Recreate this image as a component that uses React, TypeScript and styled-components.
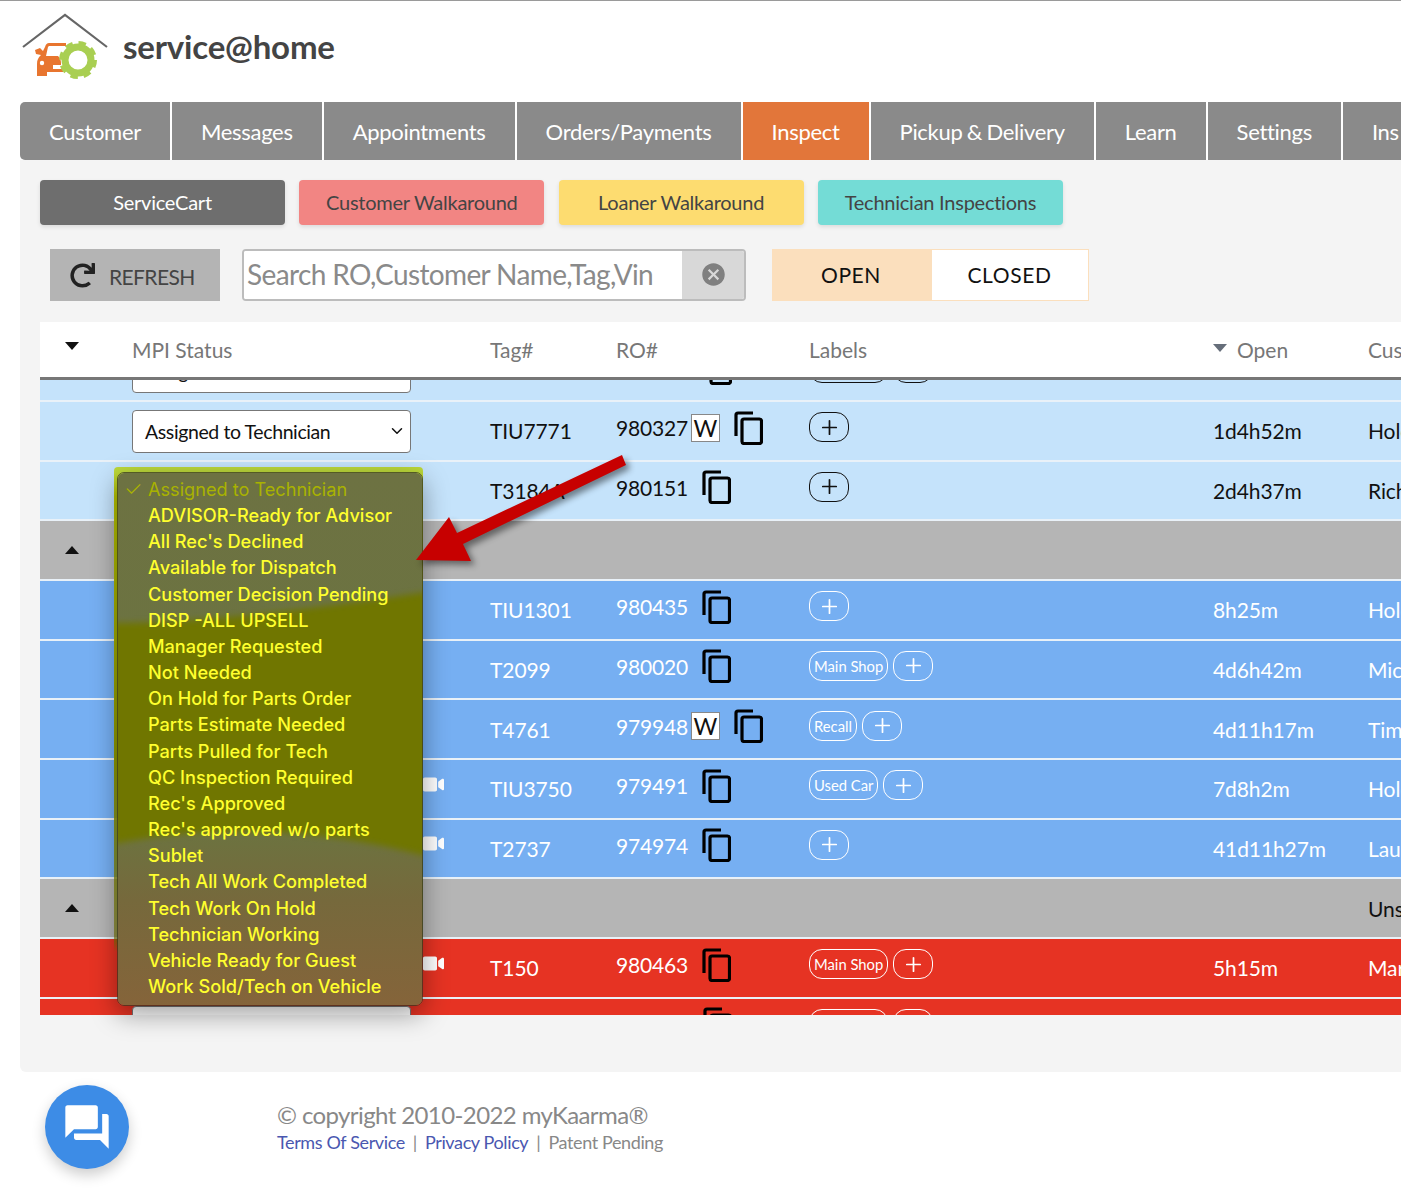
import styled, { createGlobalStyle } from "styled-components";
import { FaRedo, FaVideo } from "react-icons/fa";
import { MdCancel, MdQuestionAnswer } from "react-icons/md";
import { ChevronDown, Plus } from "lucide-react";

const GlobalStyle = createGlobalStyle`
    html, body {
        margin: 0;
        background: #fff;
        overflow: hidden;
        font-family: "Lato", "Liberation Sans", sans-serif;
    }
    * { box-sizing: border-box; }
`;

const Page = styled.div`
    width: 1401px;
    height: 1190px;
    overflow: hidden;
    border-top: 1px solid #9a9a9a;
`;

const Header = styled.header`
    height: 101px;
    padding: 0 0 12px 20px;
    display: flex;
    align-items: center;
    gap: 13px;
`;

const Brand = styled.span`
    font-size: 33px;
    font-weight: 700;
    color: #444;
    letter-spacing: -0.2px;
`;

const Tabs = styled.nav`
    display: flex;
    gap: 2px;
    margin-left: 20px;
    height: 58px;
    width: 1381px;
    overflow: hidden;
`;

const Tab = styled.div<{ $active?: boolean }>`
    flex: none;
    display: flex;
    align-items: center;
    padding: 0 29px;
    font-size: 22px;
    letter-spacing: -0.3px;
    word-spacing: -1px;
    color: #fff;
    background: ${props => props.$active ? "#e2763a" : "#8a8a8a"};
    &:first-child { border-radius: 5px 0 0 5px; }
`;

const Panel = styled.main`
    margin-left: 20px;
    height: 912px;
    padding: 20px 0 0 20px;
    background: #f4f4f4;
    border-radius: 0 0 0 6px;
`;

const Shortcuts = styled.div`
    display: flex;
    gap: 14.3px;
`;

const Shortcut = styled.div<{ $bg: string; $fg: string }>`
    width: 245px;
    height: 45px;
    padding-bottom: 2px;
    display: flex;
    align-items: center;
    justify-content: center;
    border-radius: 4px;
    font-size: 20px;
    letter-spacing: -0.25px;
    background: ${props => props.$bg};
    color: ${props => props.$fg};
    box-shadow: 0 2px 4px rgba(0, 0, 0, 0.1);
`;

const Tools = styled.div`
    display: flex;
    margin: 24px 0 0 10px;
    height: 52px;
`;

const Refresh = styled.div`
    width: 170px;
    display: flex;
    align-items: center;
    gap: 14px;
    padding-left: 20px;
    background: #b4b4b4;
    color: #444;
    font-size: 21px;
    letter-spacing: -0.6px;
    span { padding-top: 2px; }
    svg { color: #222; }
`;

const Search = styled.div`
    width: 504px;
    margin-left: 22px;
    display: flex;
    background: #fff;
    border: 2px solid #bcbcbc;
    border-radius: 4px;
    overflow: hidden;
`;

const SearchInput = styled.input`
    flex: 1;
    min-width: 0;
    border: 0;
    outline: 0;
    padding: 0 0 2px 3px;
    font-family: inherit;
    font-size: 28px;
    letter-spacing: -0.62px;
    &::placeholder { color: #8a8a8a; opacity: 1; }
`;

const ClearButton = styled.div`
    width: 62px;
    padding-bottom: 2px;
    display: flex;
    align-items: center;
    justify-content: center;
    background: #d8d8d8;
    color: #808080;
`;

const Toggle = styled.div`
    width: 317px;
    margin-left: 26px;
    display: flex;
    border: 1px solid #fbdfbd;
    background: #fff;
`;

const ToggleItem = styled.div<{ $on?: boolean }>`
    flex: ${props => props.$on ? "0 0 159px" : "1"};
    padding: 0 ${props => props.$on ? "3px" : "1px"} 2px 0;
    display: flex;
    align-items: center;
    justify-content: center;
    font-size: 21px;
    letter-spacing: 0.6px;
    color: #111;
    background: ${props => props.$on ? "#fbdfbd" : "#fff"};
`;

const Table = styled.section`
    position: relative;
    margin-top: 21px;
`;

const HeadRow = styled.div`
    display: grid;
    grid-template-columns: 92px 358px 126px 193px 404px 155px 200px;
    height: 58px;
    align-items: center;
    background: #fff;
    border-bottom: 3px solid #777;
    color: #777;
    font-size: 21px;
`;

const RowsViewport = styled.div`
    height: 635px;
    overflow: hidden;
`;

const toneBg = { light: "#c5e3fb", blue: "#76aff2", red: "#e63323", group: "#b5b5b5" };
type Tone = keyof typeof toneBg;

const Row = styled.div<{ $tone: Tone; $scrolled?: boolean }>`
    display: grid;
    grid-template-columns: 92px 358px 126px 193px 404px 155px 200px;
    height: 59.67px;
    align-items: center;
    margin-top: ${props => props.$scrolled ? "-37.67px" : "0"};
    border-bottom: 2px solid #e9f1f8;
    background: ${props => toneBg[props.$tone]};
    color: ${props => props.$tone === "light" || props.$tone === "group" ? "#111" : "#fff"};
    font-size: 21px;
    letter-spacing: -0.1px;
    white-space: nowrap;
`;

const Caret = styled.span<{ $down?: boolean; $muted?: boolean }>`
    display: inline-block;
    width: 0;
    height: 0;
    border-left: 7px solid transparent;
    border-right: 7px solid transparent;
    ${props => props.$down
        ? `border-top: 8px solid ${props.$muted ? "#666e7a" : "#111"};`
        : "border-bottom: 8px solid #111;"}
`;

const CaretCell = styled.div<{ $lift?: boolean }>`
    padding-left: 25px;
    display: flex;
    margin-top: ${props => props.$lift ? "-8px" : "0"};
`;

const OpenHead = styled.div`
    display: flex;
    align-items: center;
    gap: 10px;
    ${Caret} { margin-top: -4px; }
`;

const StatusCell = styled.div`
    display: flex;
    align-items: center;
    gap: 12px;
    margin-top: 1px;
    svg.camera { margin-bottom: 10px; }
`;

const StatusSelect = styled.div`
    width: 279px;
    height: 43px;
    display: flex;
    align-items: center;
    justify-content: space-between;
    padding: 0 4px 0 12px;
    background: #fff;
    border: 1px solid #777;
    border-radius: 4px;
    font-size: 19.5px;
    letter-spacing: -0.4px;
    color: #111;
`;

const RoCell = styled.div`
    display: flex;
    align-items: center;
    padding-bottom: 6px;
    letter-spacing: -0.2px;
`;

const RoBlank = styled.span`
    width: 73px;
    flex: none;
`;

const WarrantyBox = styled.span`
    width: 29px;
    height: 28px;
    margin-left: 3px;
    display: flex;
    align-items: center;
    justify-content: center;
    background: #fff;
    border: 1px solid #888;
    color: #111;
    font-size: 23px;
`;

const CopyIcon = styled.svg`
    margin-left: 14px;
    width: 29px;
    height: 34px;
    flex: none;
`;

const LabelsCell = styled.div`
    display: flex;
    gap: 5px;
    padding-bottom: 7px;
`;

const Pill = styled.span`
    height: 30px;
    display: flex;
    align-items: center;
    padding: 0 4px;
    border: 1.5px solid currentColor;
    border-radius: 13px;
    font-size: 14.8px;
    letter-spacing: 0;
`;

const BlankPill = styled(Pill)`
    width: 79px;
`;

const AddPill = styled(Pill)`
    width: 40px;
    justify-content: center;
    padding: 0;
`;

const MenuFrame = styled.div`
    position: absolute;
    left: 74px;
    top: 145px;
    width: 309px;
    padding: 5px 0 0 3px;
    border-radius: 4px 4px 0 0;
    background: linear-gradient(#bcd83a 0, #bcd83a 5px, #b8c400 30px, #8f9a00 55%, rgba(120, 120, 0, 0.6) 88%, rgba(120, 120, 0, 0) 90%);
`;

const Menu = styled.div`
    position: relative;
    width: 306px;
    height: 534px;
    padding: 3px 0 0 30px;
    overflow: hidden;
    border: 1px solid rgba(50, 50, 30, 0.75);
    border-radius: 7px;
    box-shadow: 0 8px 26px rgba(0, 0, 0, 0.38);
    font-family: "Inter", "Liberation Sans", sans-serif;
    font-size: 18.15px;
    font-weight: 500;
    line-height: 26.16px;
    color: #ffff2e;
`;

const MenuWash = styled.svg`
    position: absolute;
    left: 0;
    top: 0;
    width: 306px;
    height: 534px;
`;

const MenuItem = styled.div<{ $current?: boolean }>`
    position: relative;
    white-space: nowrap;
    color: ${props => props.$current ? "#a9b200" : "#ffff2e"};
    font-weight: ${props => props.$current ? 400 : 500};
`;

const MenuCheck = styled.span`
    position: absolute;
    left: -24px;
    top: 0;
    font-size: 21px;
    font-weight: 300;
`;

const Arrow = styled.svg`
    position: absolute;
    left: 370px;
    top: 120px;
    width: 230px;
    height: 125px;
    overflow: visible;
    filter: drop-shadow(4px 4px 3px rgba(0, 0, 0, 0.45));
`;

const Footer = styled.footer`
    display: flex;
    gap: 148px;
    margin-top: 13px;
    padding-left: 45px;
`;

const ChatButton = styled.div`
    width: 84px;
    height: 84px;
    display: flex;
    align-items: center;
    justify-content: center;
    border-radius: 50%;
    background: #3d8ce6;
    color: #fff;
    box-shadow: 0 6px 14px rgba(0, 0, 0, 0.2);
`;

const Legal = styled.div`
    padding-top: 15px;
    color: #888;
`;

const Copyright = styled.div`
    font-size: 24px;
    line-height: 30px;
    letter-spacing: -0.6px;
`;

const LegalLinks = styled.div`
    display: flex;
    gap: 8px;
    font-size: 18px;
    line-height: 24px;
    letter-spacing: -0.38px;
`;

const LegalLink = styled.a`
    color: #4a57b0;
    text-decoration: none;
`;

function Logo() {
    return (
        <svg width="90" height="72" viewBox="20 10 90 72">
            <path d="M23 47 L65 15 L107 47" fill="none" stroke="#666" strokeWidth="2.2" />
            <path d="M66 43 H49 C47 43 46 44 45 47 L43 51 L40 48 L35 50 L36 54 L41 55 C38 58 37 60 37 64 V76 H47 V72 H63 V69 H53 V65 H61 V63 C61 60 60 58 58 56 H46 L48 47 C48.500 46 49 46 50 46 H66 Z" fill="#e8752f" />
            <circle cx="42" cy="63" r="2.200" fill="#fff" />
            <circle cx="78" cy="60" r="13" fill="none" stroke="#a9cf52" strokeWidth="7" />
            <circle cx="78" cy="60" r="16.500" fill="none" stroke="#a9cf52" strokeWidth="5" strokeDasharray="7.2 5.76" />
        </svg>
    );
}

function Copy() {
    return (
        <CopyIcon viewBox="0 0 29 34" fill="none" stroke="#000" strokeWidth="3.200">
            <path d="M2 25 V4 Q2 2 4 2 H19" />
            <rect x="8" y="8" width="19.500" height="24.500" rx="2" />
        </CopyIcon>
    );
}

type Item = {
    tone: Tone;
    tag?: string;
    ro?: string;
    flagged?: boolean;
    labels?: string[];
    open?: string;
    customer?: string;
    video?: boolean;
    status?: string;
    group?: boolean;
    stub?: boolean;
};

const items: Item[] = [
    { tone: "light", stub: true, status: "Assigned to Technician" },
    { tone: "light", tag: "TIU7771", ro: "980327", flagged: true, labels: [], open: "1d4h52m", customer: "Holden", status: "Assigned to Technician" },
    { tone: "light", tag: "T3184A", ro: "980151", labels: [], open: "2d4h37m", customer: "Richard" },
    { tone: "group", group: true },
    { tone: "blue", tag: "TIU1301", ro: "980435", labels: [], open: "8h25m", customer: "Holden" },
    { tone: "blue", tag: "T2099", ro: "980020", labels: ["Main Shop"], open: "4d6h42m", customer: "Michael" },
    { tone: "blue", tag: "T4761", ro: "979948", flagged: true, labels: ["Recall"], open: "4d11h17m", customer: "Timothy" },
    { tone: "blue", tag: "TIU3750", ro: "979491", labels: ["Used Car"], open: "7d8h2m", customer: "Holden", video: true },
    { tone: "blue", tag: "T2737", ro: "974974", labels: [], open: "41d11h27m", customer: "Laura", video: true },
    { tone: "group", group: true, customer: "Unscheduled" },
    { tone: "red", tag: "T150", ro: "980463", labels: ["Main Shop"], open: "5h15m", customer: "Martin", video: true },
    { tone: "red", stub: true, video: true },
];

const statuses = [
    "ADVISOR-Ready for Advisor",
    "All Rec's Declined",
    "Available for Dispatch",
    "Customer Decision Pending",
    "DISP -ALL UPSELL",
    "Manager Requested",
    "Not Needed",
    "On Hold for Parts Order",
    "Parts Estimate Needed",
    "Parts Pulled for Tech",
    "QC Inspection Required",
    "Rec's Approved",
    "Rec's approved w/o parts",
    "Sublet",
    "Tech All Work Completed",
    "Tech Work On Hold",
    "Technician Working",
    "Vehicle Ready for Guest",
    "Work Sold/Tech on Vehicle",
];

export default function App() {
    return (
        <Page>
            <GlobalStyle />
            <Header>
                <Logo />
                <Brand>service@home</Brand>
            </Header>
            <Tabs>
                <Tab>Customer</Tab>
                <Tab>Messages</Tab>
                <Tab>Appointments</Tab>
                <Tab>Orders/Payments</Tab>
                <Tab $active>Inspect</Tab>
                <Tab>Pickup &amp; Delivery</Tab>
                <Tab>Learn</Tab>
                <Tab>Settings</Tab>
                <Tab>Ins</Tab>
            </Tabs>
            <Panel>
                <Shortcuts>
                    <Shortcut $bg="#6e6e6e" $fg="#fff">ServiceCart</Shortcut>
                    <Shortcut $bg="#f28583" $fg="#444">Customer Walkaround</Shortcut>
                    <Shortcut $bg="#fddc70" $fg="#444">Loaner Walkaround</Shortcut>
                    <Shortcut $bg="#74dcd6" $fg="#444">Technician Inspections</Shortcut>
                </Shortcuts>
                <Tools>
                    <Refresh><FaRedo size={25} /><span>REFRESH</span></Refresh>
                    <Search>
                        <SearchInput placeholder="Search RO,Customer Name,Tag,Vin" />
                        <ClearButton><MdCancel size={27} /></ClearButton>
                    </Search>
                    <Toggle>
                        <ToggleItem $on>OPEN</ToggleItem>
                        <ToggleItem>CLOSED</ToggleItem>
                    </Toggle>
                </Tools>
                <Table>
                    <HeadRow>
                        <CaretCell $lift><Caret $down /></CaretCell>
                        <div>MPI Status</div>
                        <div>Tag#</div>
                        <div>RO#</div>
                        <div>Labels</div>
                        <OpenHead><Caret $down $muted />Open</OpenHead>
                        <div>Customer</div>
                    </HeadRow>
                    <RowsViewport>
                        {items.map((x: Item, i: number) => (
                            <Row key={i} $tone={x.tone} $scrolled={i === 0}>
                                {x.group ? <CaretCell><Caret /></CaretCell> : <div />}
                                {x.group ? <div /> : (
                                    <StatusCell>
                                        <StatusSelect>
                                            {x.status}
                                            <ChevronDown size={18} />
                                        </StatusSelect>
                                        {x.video && <FaVideo className="camera" size={21} color="#fff" />}
                                    </StatusCell>
                                )}
                                <div>{x.tag}</div>
                                {x.group ? <div /> : (
                                    <RoCell>
                                        {x.stub ? <RoBlank /> : x.ro}
                                        {x.flagged && <WarrantyBox>W</WarrantyBox>}
                                        <Copy />
                                    </RoCell>
                                )}
                                {x.group ? <div /> : (
                                    <LabelsCell>
                                        {x.stub && <BlankPill />}
                                        {x.labels?.map((label: string) => <Pill key={label}>{label}</Pill>)}
                                        <AddPill><Plus size={23} strokeWidth={1.8} /></AddPill>
                                    </LabelsCell>
                                )}
                                <div>{x.open}</div>
                                <div>{x.customer}</div>
                            </Row>
                        ))}
                    </RowsViewport>
                    <MenuFrame>
                        <Menu>
                            <MenuWash viewBox="0 0 306 534" preserveAspectRatio="none">
                                <defs>
                                    <linearGradient id="wash" x1="0" y1="0" x2="0" y2="1">
                                        <stop offset="0" stopColor="#6d7242" />
                                        <stop offset="0.66" stopColor="#6b7440" />
                                        <stop offset="0.8" stopColor="#76693c" />
                                        <stop offset="1" stopColor="#85643a" />
                                    </linearGradient>
                                    <filter id="soft"><feGaussianBlur stdDeviation="3" /></filter>
                                </defs>
                                <rect width="306" height="534" fill="url(#wash)" />
                                <path d="M-10 150 C90 150 200 135 316 118 V385 C230 362 120 345 -10 372 Z" fill="#6f7600" filter="url(#soft)" />
                            </MenuWash>
                            <MenuItem $current><MenuCheck>✓</MenuCheck>Assigned to Technician</MenuItem>
                            {statuses.map((s: string) => <MenuItem key={s}>{s}</MenuItem>)}
                        </Menu>
                    </MenuFrame>
                    <Arrow viewBox="410 442 230 125">
                        <path d="M622 455 L626 465 L463 544 L471 561 L416 560 L449 517 L457 533 Z" fill="#c70000" />
                    </Arrow>
                </Table>
            </Panel>
            <Footer>
                <ChatButton><MdQuestionAnswer size={52} /></ChatButton>
                <Legal>
                    <Copyright>© copyright 2010-2022 myKaarma®</Copyright>
                    <LegalLinks>
                        <LegalLink>Terms Of Service</LegalLink>
                        <span>|</span>
                        <LegalLink>Privacy Policy</LegalLink>
                        <span>|</span>
                        <span>Patent Pending</span>
                    </LegalLinks>
                </Legal>
            </Footer>
        </Page>
    );
}
